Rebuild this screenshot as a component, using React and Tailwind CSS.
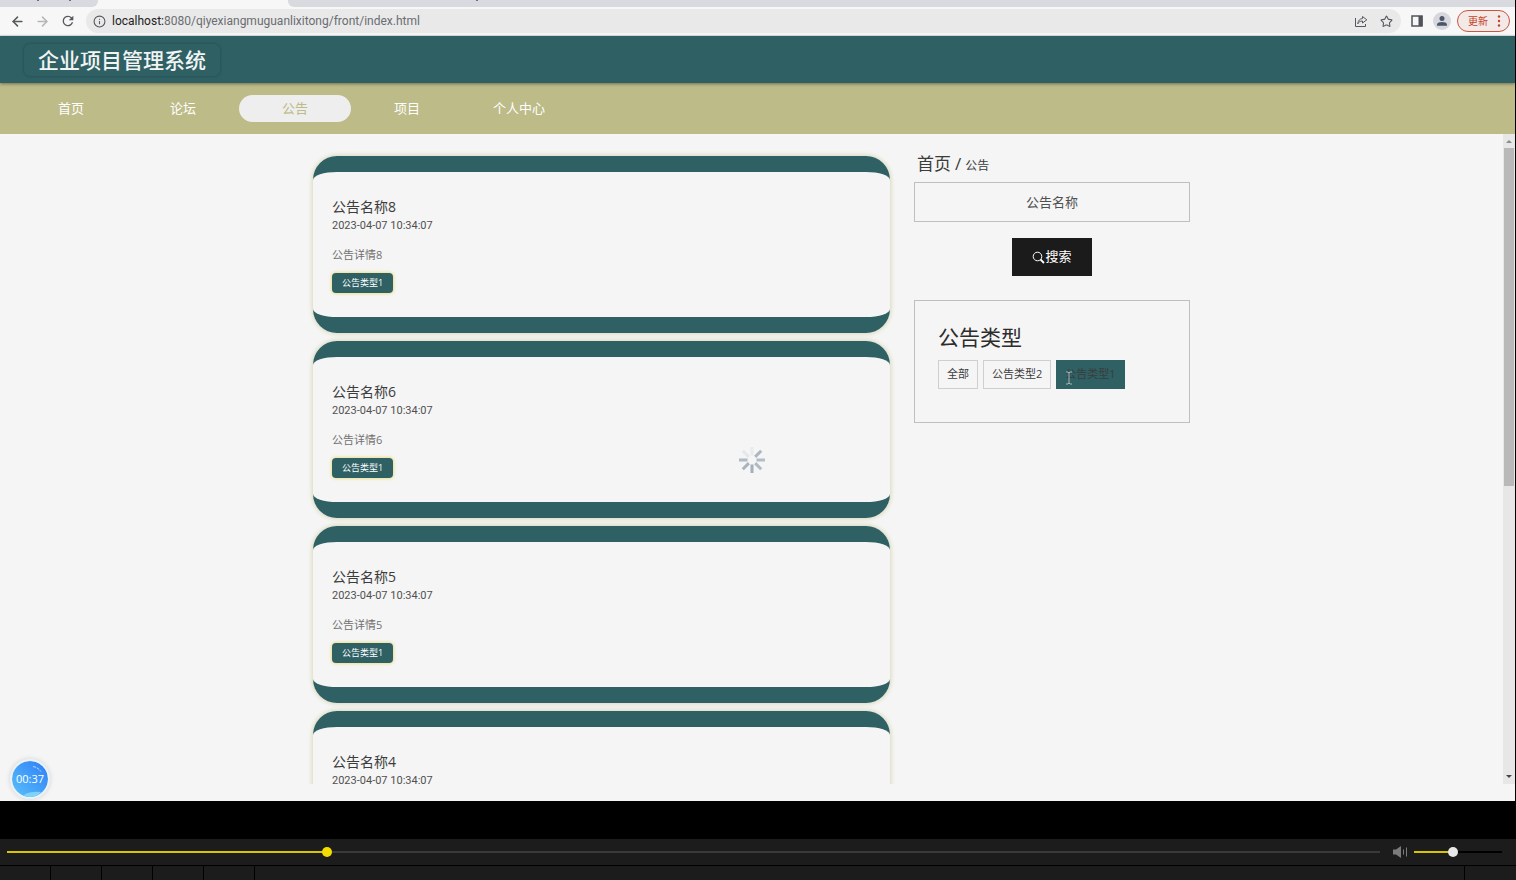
import React, { useState } from "react";
import { ArrowLeft, ArrowRight, Info, Star } from "lucide-react";

const navItems = ["首页", "论坛", "公告", "项目", "个人中心"];
const notices = [8, 6, 5, 4];
const noticeTypes = ["全部", "公告类型2", "公告类型1"];

function BrowserBar() {
  return (
    <div className="shrink-0">
      {/* Bottom edge of the tab strip */}
      <div className="flex h-[7px] bg-[#f7f7f7]">
        <div className="flex w-[98px] rounded-br-md bg-[#d9dae0] pl-[37px] gap-[30px]">
          <span className="h-px w-0.5 bg-gray-500" />
          <span className="h-px w-0.5 bg-gray-500" />
        </div>
        <div className="w-[190px]" />
        <div className="flex-1 rounded-bl-md bg-[#d9dae0] pl-[188px]">
          <span className="block h-px w-0.5 bg-gray-500" />
        </div>
      </div>
      <div className="flex h-7 items-center bg-[#f7f7f7] pl-2.5 pr-[5px] text-[#55585c]">
        <button aria-label="后退" className="mr-2.5">
          <ArrowLeft size={15} strokeWidth={2.4} />
        </button>
        <button aria-label="前进" className="mr-2.5 text-[#b4b6b9]">
          <ArrowRight size={15} strokeWidth={2.4} />
        </button>
        <button aria-label="刷新">
          <svg width="16" height="16" viewBox="0 0 24 24" fill="currentColor">
            <path d="M17.65 6.35A7.96 7.96 0 0 0 12 4a8 8 0 1 0 7.73 10h-2.08A6 6 0 1 1 12 6c1.66 0 3.14.69 4.22 1.78L13 11h7V4z" />
          </svg>
        </button>
        <div className="ml-2.5 flex h-6 flex-1 items-center rounded-full bg-[#e9e9e9] pl-[7px] pr-2">
          <Info size={13} className="mr-1.5 shrink-0" />
          <div className="flex-1 font-[Roboto,sans-serif] text-xs text-[#6a6d71]">
            <span className="text-[#222]">localhost:</span>8080/qiyexiangmuguanlixitong/front/index.html
          </div>
          <button aria-label="分享" className="mr-3">
            <svg width="14" height="14" viewBox="0 0 14 14" fill="none" stroke="currentColor" strokeWidth="1">
              <path d="M1.500 4v8.500h10V10" />
              <path d="M8.500 2.500 12.800 5.800 8.500 9V7C6 7 4.800 8 3.800 9.800 4 6.500 6 4.700 8.500 4.500z" strokeLinejoin="round" />
            </svg>
          </button>
          <button aria-label="收藏">
            <Star size={13} strokeWidth={2} />
          </button>
        </div>
        <button aria-label="侧边栏" className="ml-2.5">
          <svg width="12" height="12" viewBox="0 0 12 12">
            <rect x="1" y="1" width="10" height="10" fill="none" stroke="#50545a" strokeWidth="1.500" />
            <rect x="7.500" y="1" width="4" height="10" fill="#50545a" />
          </svg>
        </button>
        <button aria-label="用户" className="ml-2.5 flex size-[18px] items-center justify-center rounded-full bg-[#d6d8de]">
          <svg width="12" height="12" viewBox="0 0 12 12" fill="#4b5668">
            <circle cx="6" cy="3.500" r="2.500" />
            <path d="M1 10.800V9.500C1 7.800 3.500 7 6 7s5 .8 5 2.500v1.300z" />
          </svg>
        </button>
        <button className="ml-1.5 flex h-[22px] w-[53px] items-center justify-between rounded-full border border-[#cb5543] bg-[#f3e9e6] pl-2.5 pr-2 text-[10px] text-[#c5402c]">
          更新
          <svg width="4" height="12" viewBox="0 0 4 12" fill="currentColor">
            <circle cx="2" cy="1.500" r="1.200" />
            <circle cx="2" cy="6" r="1.200" />
            <circle cx="2" cy="10.500" r="1.200" />
          </svg>
        </button>
      </div>
      <div className="h-px bg-[#dfe5e6]" />
    </div>
  );
}

function SiteHeader() {
  return (
    <header className="shrink-0">
      <div className="relative flex h-[47px] items-center bg-[#2e6064] pl-6 shadow-[0_1px_3px_rgba(0,0,0,0.4)]">
        <h1 className="rounded-md px-3.5 text-[21px] font-medium leading-8 text-[#f2f4f4] shadow-[0_0_3px_rgba(0,0,0,0.25)]">企业项目管理系统</h1>
      </div>
      <nav className="flex h-[51px] items-center bg-[#bdbb88] pl-[15px] text-[13px] text-white">
        {navItems.map((item) => (
          <a
            key={item}
            href="#"
            className={
              item === "公告"
                ? "h-[27px] w-28 rounded-full bg-[#eeeeee] text-center leading-[27px] text-[#bdbb88]"
                : "h-[27px] w-28 text-center leading-[27px]"
            }
          >
            {item}
          </a>
        ))}
      </nav>
    </header>
  );
}

function NoticeCard({ id }) {
  return (
    <article className="rounded-3xl border-y-[16px] border-[#2e6064] px-[19px] pb-6 pt-[25px] shadow-[0_0_4px_1px_#d8d8b8]">
      <h2 className="text-sm leading-5 text-[#3c3c3c]">公告名称{id}</h2>
      <p className="font-[Roboto,sans-serif] text-[11px] leading-[18px] text-[#505050]">2023-04-07 10:34:07</p>
      <p className="mt-2.5 text-[11px] leading-5 text-[#707070]">公告详情{id}</p>
      <span className="mt-2 block h-5 w-fit rounded bg-[#2e6064] px-2.5 text-[9px] leading-5 text-white shadow-[0_0_3px_1px_#eadf8c]">
        公告类型1
      </span>
    </article>
  );
}

function Sidebar() {
  return (
    <aside className="w-[276px] shrink-0">
      <div className="flex h-7 items-baseline pl-[3px] leading-7 text-[#3c3c3c]">
        <a href="#" className="text-[17px]">首页</a>
        <span className="mx-1 text-[17px]">/</span>
        <span className="text-xs">公告</span>
      </div>
      <input
        type="text"
        aria-label="公告名称"
        placeholder="公告名称"
        className="mt-1 block h-10 w-full border border-[#bfbfbf] bg-transparent text-center text-[13px] placeholder:text-[#505050]"
      />
      <button className="mx-auto mt-4 flex h-[38px] w-20 items-center justify-center bg-[#1b1b1b] text-[13px] text-white">
        <svg width="13" height="13" viewBox="0 0 13 13" fill="none" stroke="currentColor">
          <circle cx="5.500" cy="5.500" r="4.300" />
          <path d="m8.500 8.500 3.500 3.500" strokeWidth="1.800" />
        </svg>
        搜索
      </button>
      <section className="mt-6 border border-[#bfbfbf] px-[23px] pb-[33px] pt-6">
        <h2 className="text-[21px] leading-6 text-[#2c2c2c]">公告类型</h2>
        <div className="mt-[11px] flex gap-[5px] text-[11px] text-[#3c3c3c]">
          {noticeTypes.map((type) => (
            <button
              key={type}
              className={
                type === "公告类型1"
                  ? "relative h-[29px] border border-[#2e6064] bg-[#2e6064] px-2"
                  : "h-[29px] border border-[#cfcfcf] px-2"
              }
            >
              {type}
              {type === "公告类型1" && (
                <svg className="absolute left-2 top-2.5" width="8" height="14" viewBox="0 0 8 14" fill="none" stroke="#a9b4b5">
                  <path d="M1 1h2l1 1 1-1h2M4 2v10M1 13h2l1-1 1 1h2" />
                </svg>
              )}
            </button>
          ))}
        </div>
      </section>
    </aside>
  );
}

function Spinner() {
  // opacity of each arm, clockwise from the top
  const arms = [0.15, 0.9, 0.8, 0.85, 1, 0.95, 0.85, 0.2];
  return (
    <svg className="absolute left-1/2 top-[326px] -translate-x-1/2 -translate-y-1/2" width="28" height="28" viewBox="-14 -14 28 28">
      {arms.map((opacity, i) => (
        <rect
          key={i}
          x="-1.500"
          y="-13"
          width="3"
          height="8.500"
          fill="#a3afba"
          opacity={opacity}
          transform={`rotate(${i * 45})`}
        />
      ))}
    </svg>
  );
}

function Scrollbar() {
  return (
    <div className="flex w-3 shrink-0 flex-col items-center bg-[#e7e7e7]">
      <svg className="my-1 shrink-0" width="6" height="6" viewBox="0 0 6 6" fill="#8a8a8a">
        <path d="M0 5 3 2l3 3z" />
      </svg>
      <div className="h-[52%] w-2.5 bg-[#b9b9b9]" />
      <svg className="mb-1 mt-auto shrink-0" width="6" height="6" viewBox="0 0 6 6" fill="#444">
        <path d="M0 1h6L3 4z" />
      </svg>
    </div>
  );
}

function RecordBadge() {
  return (
    <div className="absolute bottom-1 left-3 flex size-9 items-center justify-center overflow-hidden rounded-full bg-linear-to-tr from-[#5cc0fa] to-[#2f7df6] text-[11px] text-white outline-2 outline-[#eaf2fa] shadow-[0_0_5px_2px_rgba(0,0,0,0.15)]">
      <svg className="absolute inset-0" width="36" height="36" viewBox="0 0 36 36" fill="none">
        <path d="M21 5.500q5 1 8 5" stroke="#b9dcff" strokeDasharray="3 1" />
        <path d="M12 34q6-4 17-3l-5 5h-11z" fill="#7fd3fb" />
      </svg>
      <span className="relative">00:37</span>
    </div>
  );
}

function Slider({ label, value, onChange, fill, rest, className }) {
  return (
    <input
      type="range"
      aria-label={label}
      min="0"
      max="1000"
      value={value}
      onChange={(e) => onChange(Number(e.target.value))}
      className={className}
      style={{ background: `linear-gradient(to right, ${fill} ${value / 10}%, ${rest} ${value / 10}%)` }}
    />
  );
}

function PlayerBar() {
  const [time, setTime] = useState(231);
  const [volume, setVolume] = useState(440);
  return (
    <footer className="shrink-0">
      <div className="flex h-[26px] items-center bg-[#1c1c1c] pl-[7px] pr-3.5">
        <Slider
          label="播放进度"
          value={time}
          onChange={setTime}
          fill="#d9c400"
          rest="#3a3a3a"
          className="h-0.5 min-w-0 flex-1 appearance-none [&::-webkit-slider-thumb]:size-2.5 [&::-webkit-slider-thumb]:appearance-none [&::-webkit-slider-thumb]:rounded-full [&::-webkit-slider-thumb]:bg-[#f5dc00]"
        />
        <button aria-label="静音" className="ml-3 mr-1.5">
          <svg width="16" height="14" viewBox="0 0 16 14" fill="#7b7b7b">
            <path d="M1 4.500h3L9 1v12L4 9.500H1z" />
            <path d="M11 4.500h1v5h-1zM14 2.500h1v9h-1z" />
          </svg>
        </button>
        <Slider
          label="音量"
          value={volume}
          onChange={setVolume}
          fill="#d9c400"
          rest="#000"
          className="h-0.5 w-[88px] appearance-none [&::-webkit-slider-thumb]:size-2.5 [&::-webkit-slider-thumb]:appearance-none [&::-webkit-slider-thumb]:rounded-full [&::-webkit-slider-thumb]:bg-[#e8e8e8]"
        />
      </div>
      <div className="flex h-[15px] gap-px border-t border-black bg-black">
        {[1, 2, 3, 4, 5].map((n) => (
          <div key={n} className="w-[50px] bg-[#1c1c1c]" />
        ))}
        <div className="flex-1 bg-[#1c1c1c]" />
        <div className="w-[51px] bg-[#1c1c1c]" />
      </div>
    </footer>
  );
}

export default function App() {
  return (
    <div className="flex h-screen flex-col bg-black font-['Open_Sans','Noto_Sans_CJK_SC',sans-serif]">
      <div className="relative mr-px flex min-h-0 flex-1 flex-col bg-[#f5f5f5] pb-[17px]">
        <BrowserBar />
        <SiteHeader />
        <div className="flex min-h-0 flex-1">
          <div className="relative min-w-0 flex-1 overflow-hidden">
            <div className="mx-auto flex max-w-[877px] gap-6 pt-4">
              <main className="flex min-w-0 flex-1 flex-col gap-2 pt-1.5">
                {notices.map((id) => (
                  <NoticeCard key={id} id={id} />
                ))}
              </main>
              <Sidebar />
            </div>
            <Spinner />
          </div>
          <Scrollbar />
        </div>
        <RecordBadge />
      </div>
      <div className="h-[38px] shrink-0" />
      <PlayerBar />
    </div>
  );
}
